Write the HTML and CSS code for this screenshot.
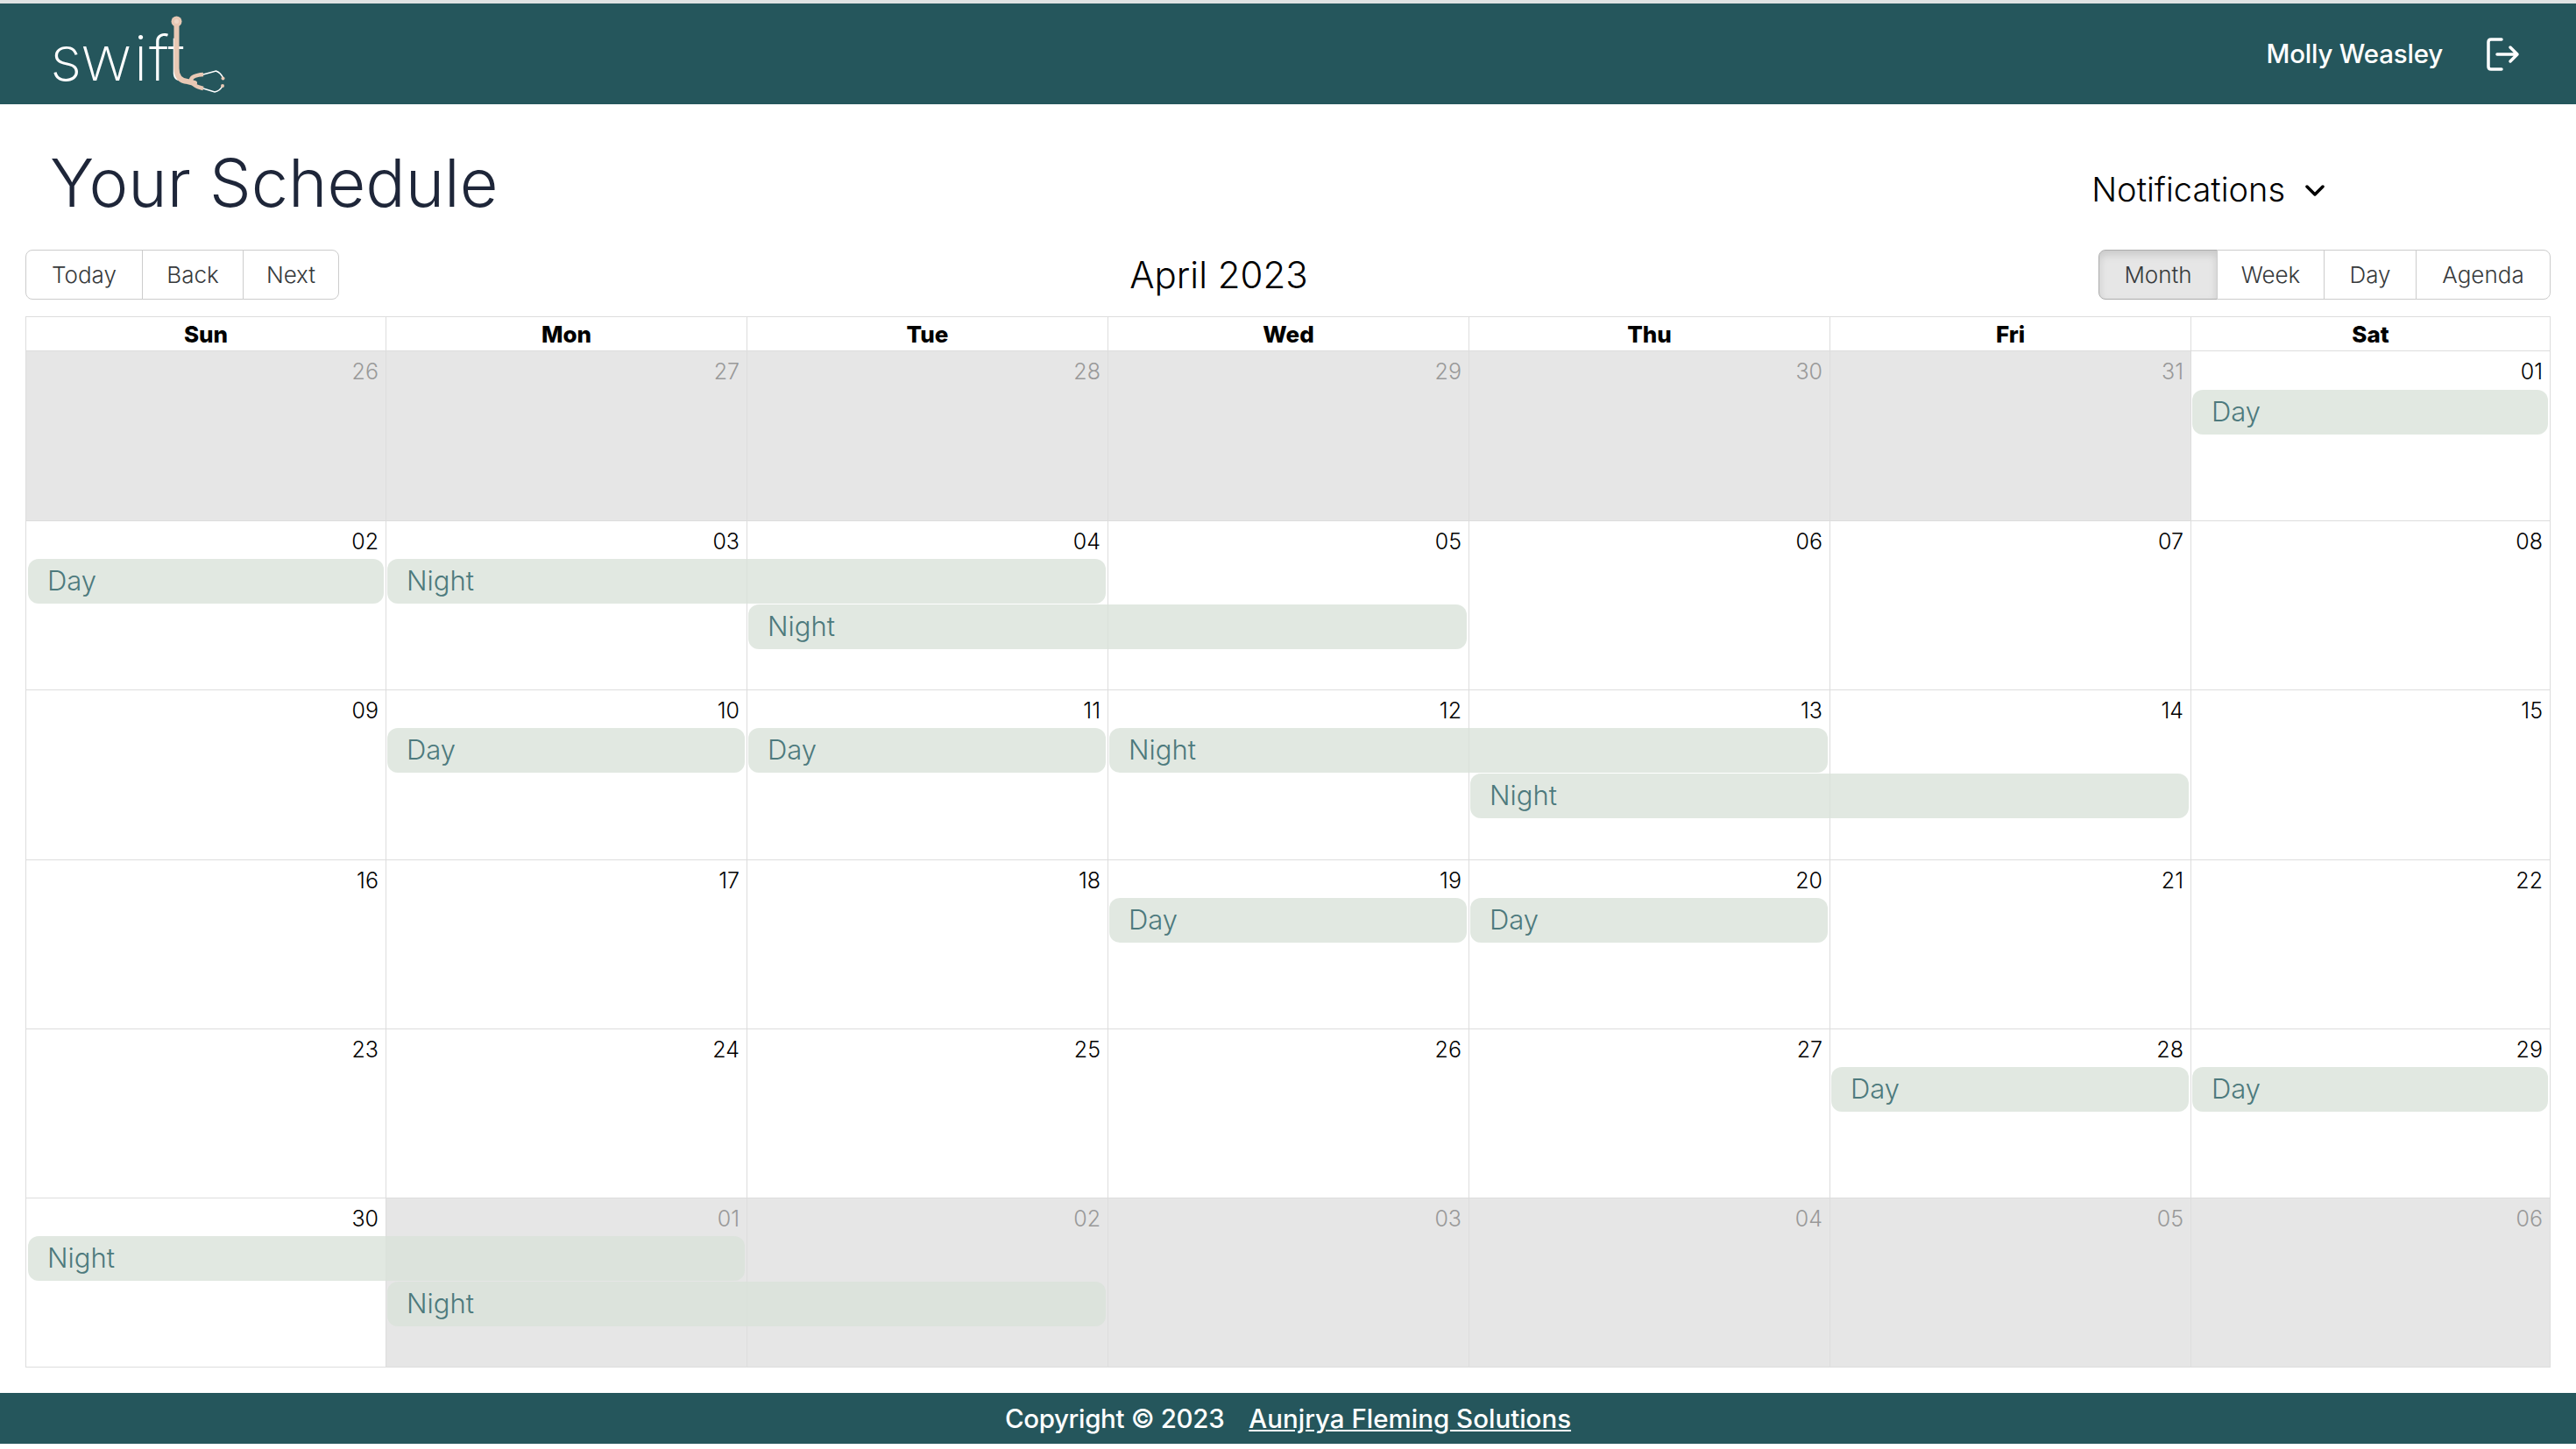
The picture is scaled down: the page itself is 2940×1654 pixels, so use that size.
FILE: index.html
```html
<!DOCTYPE html>
<html lang="en">
<head>
<meta charset="utf-8">
<title>Your Schedule</title>
<link rel="stylesheet" href="styles.css">
</head>
<body>
<header class="topbar">
  <svg class="logo" viewBox="30 4 240 115" width="240" height="115" aria-label="swift">
    <text class="logo-text" x="57 92 152.500 170 191.500" y="92">swift</text>
    <path class="tube" d="M201.500 25V78Q201.500 92 214 93L222 95"/>
    <circle class="bell" cx="201.500" cy="24.500" r="6"/>
    <circle class="bell-in" cx="201.500" cy="24.500" r="2.500"/>
    <path class="yoke" d="M232 85Q219 86 218 91Q219 98 232 101"/>
    <path class="wire" d="M232 85L246.500 81Q252 83 254.500 89M232 101L245 105Q251 104 254 98"/>
    <circle class="tip" cx="254.500" cy="89.500" r="2"/>
    <circle class="tip" cx="254" cy="98" r="2"/>
  </svg>
  <div class="user">
    <span class="user-name">Molly Weasley</span>
    <svg class="logout" viewBox="0 0 38 38" width="38" height="38" aria-label="Log out">
      <path d="M17 2H5Q2 2 2 5V33Q2 36 5 36H17M12 19H35M27 11L35 19L27 27"/>
    </svg>
  </div>
</header>
<main class="page">
  <div class="title-row">
    <h1 class="title">Your Schedule</h1>
    <div class="notifications">
      <span>Notifications</span>
      <svg class="chevron" viewBox="0 0 22 13" width="22" height="13"><path d="M2 2L11 11L20 2"/></svg>
    </div>
  </div>
  <div class="toolbar">
    <div class="btn-group">
      <button class="btn b-today">Today</button>
      <button class="btn b-back">Back</button>
      <button class="btn b-next">Next</button>
    </div>
    <div class="cal-label">April 2023</div>
    <div class="btn-group">
      <button class="btn active b-month">Month</button>
      <button class="btn b-week">Week</button>
      <button class="btn b-day">Day</button>
      <button class="btn b-agenda">Agenda</button>
    </div>
  </div>
  <section class="calendar">
    <div class="head">
      <div class="hcell">Sun</div><div class="hcell">Mon</div><div class="hcell">Tue</div><div class="hcell">Wed</div><div class="hcell">Thu</div><div class="hcell">Fri</div><div class="hcell">Sat</div>
    </div>
    <div class="month">
      <div class="week">
        <div class="cell off c1">26</div><div class="cell off c2">27</div><div class="cell off c3">28</div><div class="cell off c4">29</div><div class="cell off c5">30</div><div class="cell off c6">31</div><div class="cell c7">01</div>
        <div class="event c7 r2">Day</div>
      </div>
      <div class="week">
        <div class="cell c1">02</div><div class="cell c2">03</div><div class="cell c3">04</div><div class="cell c4">05</div><div class="cell c5">06</div><div class="cell c6">07</div><div class="cell c7">08</div>
        <div class="event c1 r2">Day</div>
        <div class="event c2 s2 r2">Night</div>
        <div class="event c3 s2 r3">Night</div>
      </div>
      <div class="week">
        <div class="cell c1">09</div><div class="cell c2">10</div><div class="cell c3">11</div><div class="cell c4">12</div><div class="cell c5">13</div><div class="cell c6">14</div><div class="cell c7">15</div>
        <div class="event c2 r2">Day</div>
        <div class="event c3 r2">Day</div>
        <div class="event c4 s2 r2">Night</div>
        <div class="event c5 s2 r3">Night</div>
      </div>
      <div class="week">
        <div class="cell c1">16</div><div class="cell c2">17</div><div class="cell c3">18</div><div class="cell c4">19</div><div class="cell c5">20</div><div class="cell c6">21</div><div class="cell c7">22</div>
        <div class="event c4 r2">Day</div>
        <div class="event c5 r2">Day</div>
      </div>
      <div class="week">
        <div class="cell c1">23</div><div class="cell c2">24</div><div class="cell c3">25</div><div class="cell c4">26</div><div class="cell c5">27</div><div class="cell c6">28</div><div class="cell c7">29</div>
        <div class="event c6 r2">Day</div>
        <div class="event c7 r2">Day</div>
      </div>
      <div class="week">
        <div class="cell c1">30</div><div class="cell off c2">01</div><div class="cell off c3">02</div><div class="cell off c4">03</div><div class="cell off c5">04</div><div class="cell off c6">05</div><div class="cell off c7">06</div>
        <div class="event c1 s2 r2">Night</div>
        <div class="event c2 s2 r3">Night</div>
      </div>
    </div>
  </section>
</main>
<footer class="footer">
  <span class="copyright">Copyright © 2023</span>
  <a class="footer-link" href="#">Aunjrya Fleming Solutions</a>
</footer>
</body>
</html>
```

FILE: styles.css
```css
* { box-sizing: border-box; }
html, body { margin: 0; padding: 0; }
body {
  height: 1654px;
  overflow: hidden;
  background: #fff;
  font-family: "Inter", "Open Sans", sans-serif;
  color: #000;
  border-top: 4px solid #dfe3e3;
}

.topbar {
  height: 115px;
  background: #25565c;
  display: flex;
  align-items: center;
  justify-content: space-between;
  padding: 0 64px 0 30px;
}
.logo { display: block; }
.logo-text {
  font-family: "Inter", sans-serif;
  font-weight: 200;
  font-size: 72px;
  fill: #fff;
}
.tube { fill: none; stroke: #e8c8b4; stroke-width: 6; stroke-linecap: round; }
.bell { fill: #e8c8b4; }
.bell-in { fill: #f0d8c8; }
.yoke { fill: none; stroke: #e8c8b4; stroke-width: 4.500; }
.wire { fill: none; stroke: #fff; stroke-width: 1.600; }
.tip { fill: #e8c8b4; }
.user { display: flex; align-items: center; gap: 50px; }
.user-name { color: #fff; font-size: 29.500px; font-weight: 500; letter-spacing: -0.2px; padding-bottom: 2px; }
.logout { display: block; }
.logout path { fill: none; stroke: #fff; stroke-width: 3.500; stroke-linecap: round; stroke-linejoin: round; }

.page { padding: 0 29px; }
.title-row {
  height: 166px;
  display: flex;
  align-items: center;
  justify-content: space-between;
  padding: 12px 258px 0 28px;
}
.title {
  margin: 0;
  font-size: 75.500px;
  font-weight: 350;
  color: #1e2639;
}
.notifications {
  display: flex;
  align-items: center;
  gap: 23px;
  font-size: 38px;
  font-weight: 350;
  padding-top: 16px;
}
.chevron { display: block; margin-top: 2px; }
.chevron path { fill: none; stroke: #000; stroke-width: 3.500; stroke-linecap: round; stroke-linejoin: round; }

.toolbar {
  height: 57px;
  margin-bottom: 19px;
  display: flex;
  align-items: center;
  justify-content: space-between;
}
.btn-group { display: flex; height: 57px; }
.btn {
  height: 57px;
  padding: 0;
  margin: 0 0 0 -1px;
  background: #fff;
  border: 1.500px solid #ccc;
  font: 350 26px "Inter", sans-serif;
  color: #373a3c;
}
.btn:first-child { margin-left: 0; border-radius: 8px 0 0 8px; }
.btn:last-child { border-radius: 0 8px 8px 0; }
.btn.active {
  background: #e6e6e6;
  border-color: #adadad;
  box-shadow: inset 0 5px 10px rgba(0, 0, 0, 0.125);
}
.b-today { width: 134px; }
.b-back { width: 116px; }
.b-next { width: 110px; }
.b-month { width: 136px; }
.b-week { width: 123px; }
.b-day { width: 106px; }
.b-agenda { width: 154px; }
.cal-label { font-size: 42px; font-weight: 350; }

.calendar { border: 1.500px solid #ddd; height: 1200px; display: flex; flex-direction: column; }
.head { display: grid; grid-template-columns: 410fr repeat(5, 412fr) 410fr; height: 39px; border-bottom: 1.500px solid #ddd; }
.hcell {
  display: flex;
  align-items: center;
  justify-content: center;
  font-size: 26px;
  font-weight: 800;
  border-left: 1px solid #ddd;
}
.hcell:first-child { border-left: 0; }
.month { flex: 1; display: grid; grid-template-rows: repeat(6, 1fr); }
.week {
  display: grid;
  grid-template-columns: 410fr repeat(5, 412fr) 410fr;
  grid-template-rows: 43px 52px 52px 1fr;
  border-top: 1.500px solid #ddd;
  min-height: 0;
}
.week:first-child { border-top: 0; grid-template-rows: 44px 52px 52px 1fr; }
.cell {
  grid-row: 1 / -1;
  padding: 7px 8px 0 0;
  text-align: right;
  font-size: 25px;
  font-weight: 350;
  line-height: 32px;
  border-left: 1px solid #ddd;
}
.cell.c1 { border-left: 0; }
.off { background: #e6e6e6; color: #999; }

.c1 { grid-column-start: 1; }
.c2 { grid-column-start: 2; }
.c3 { grid-column-start: 3; }
.c4 { grid-column-start: 4; }
.c5 { grid-column-start: 5; }
.c6 { grid-column-start: 6; }
.c7 { grid-column-start: 7; }
.s2 { grid-column-end: span 2; }
.r2 { grid-row-start: 2; }
.r3 { grid-row-start: 3; }

.event {
  margin: 0 2px 1px 2px;
  padding: 0 0 2px 22px;
  display: flex;
  align-items: center;
  background: rgba(216, 226, 216, 0.78);
  border-radius: 12px;
  color: #4d7a7d;
  font-size: 31px;
  font-weight: 350;
  line-height: 1;
  z-index: 1;
}

.footer {
  position: absolute;
  left: 0;
  top: 1590px;
  width: 100%;
  height: 58px;
  background: #25565c;
  color: #fff;
  display: flex;
  align-items: center;
  justify-content: center;
  gap: 28px;
  font-size: 29.500px;
  font-weight: 500;
}
.copyright { letter-spacing: -0.350px; }
.footer-link { color: #fff; text-decoration: underline; }
```
